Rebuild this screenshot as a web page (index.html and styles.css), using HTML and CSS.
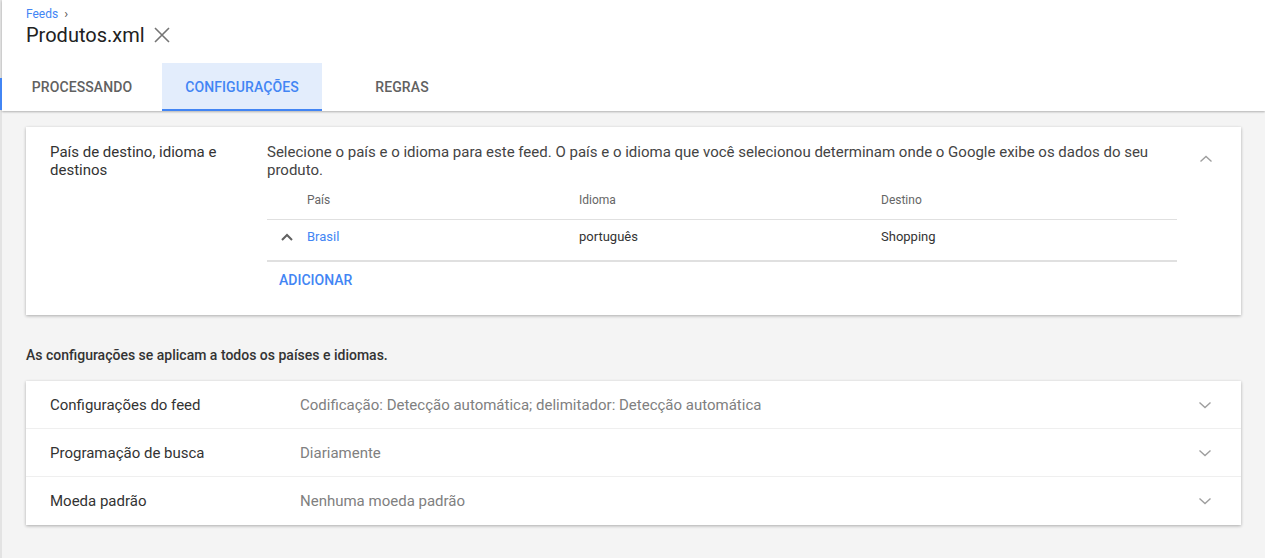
FILE: index.html
```html
<!DOCTYPE html>
<html lang="pt-BR">
<head>
<meta charset="utf-8">
<title>Produtos.xml</title>
<link rel="stylesheet" href="styles.css">
</head>
<body>
<div class="page">
  <header class="header">
    <div class="crumbs"><a class="crumb-link">Feeds</a><span class="crumb-sep">›</span></div>
    <div class="title-row">
      <h1 class="title">Produtos.xml</h1>
      <svg class="close" width="18" height="18" viewBox="0 0 18 18"><path d="M2 2 L16 16 M16 2 L2 16" stroke="#757575" stroke-width="1.6" fill="none"/></svg>
    </div>
    <nav class="tabs">
      <div class="tab">PROCESSANDO</div>
      <div class="tab active">CONFIGURAÇÕES</div>
      <div class="tab">REGRAS</div>
    </nav>
    <span class="side-indicator"></span>
  </header>

  <main class="content">
    <section class="card country-card">
      <div class="card-label">País de destino, idioma e destinos</div>
      <div class="card-body">
        <p class="desc">Selecione o país e o idioma para este feed. O país e o idioma que você selecionou determinam onde o Google exibe os dados do seu produto.</p>
        <div class="table">
          <div class="trow thead">
            <span class="cell-icon"></span>
            <span class="cell c1">País</span>
            <span class="cell c2">Idioma</span>
            <span class="cell c3">Destino</span>
          </div>
          <div class="trow tbody">
            <span class="cell-icon"><svg width="14" height="10" viewBox="0 0 14 10"><path d="M2 8 L7 3 L12 8" stroke="#616161" stroke-width="2" fill="none"/></svg></span>
            <span class="cell c1 link">Brasil</span>
            <span class="cell c2">português</span>
            <span class="cell c3">Shopping</span>
          </div>
        </div>
        <div class="add">ADICIONAR</div>
      </div>
      <div class="card-toggle"><svg width="14" height="10" viewBox="0 0 14 10"><path d="M1.5 7.5 L7 2.5 L12.5 7.5" stroke="#9e9e9e" stroke-width="1.4" fill="none"/></svg></div>
    </section>

    <p class="note">As configurações se aplicam a todos os países e idiomas.</p>

    <section class="card list-card">
      <div class="lrow">
        <span class="lname">Configurações do feed</span>
        <span class="lval">Codificação: Detecção automática; delimitador: Detecção automática</span>
        <svg class="chev" width="14" height="10" viewBox="0 0 14 10"><path d="M1.5 2.5 L7 7.5 L12.5 2.5" stroke="#9e9e9e" stroke-width="1.4" fill="none"/></svg>
      </div>
      <div class="lrow">
        <span class="lname">Programação de busca</span>
        <span class="lval">Diariamente</span>
        <svg class="chev" width="14" height="10" viewBox="0 0 14 10"><path d="M1.5 2.5 L7 7.5 L12.5 2.5" stroke="#9e9e9e" stroke-width="1.4" fill="none"/></svg>
      </div>
      <div class="lrow">
        <span class="lname">Moeda padrão</span>
        <span class="lval">Nenhuma moeda padrão</span>
        <svg class="chev" width="14" height="10" viewBox="0 0 14 10"><path d="M1.5 2.5 L7 7.5 L12.5 2.5" stroke="#9e9e9e" stroke-width="1.4" fill="none"/></svg>
      </div>
    </section>
  </main>
</div>
</body>
</html>
```

FILE: styles.css
```css
* { box-sizing: border-box; }
html, body { margin: 0; padding: 0; }
body {
  font-family: Roboto, "Liberation Sans", Arial, sans-serif;
  background: #f4f4f4;
  color: #333;
  height: 558px;
  overflow: hidden;
}
.page {
  border-left: 2px solid #e3e3e3;
  min-height: 558px;
}
.header {
  position: relative;
  background: #fff;
  padding-top: 6px;
  box-shadow: 0 1px 2px rgba(0,0,0,0.28);
  z-index: 1;
}
.crumbs {
  padding-left: 24px;
  font-size: 12px;
  line-height: 16px;
  display: flex;
  gap: 6px;
  align-items: center;
}
.crumb-link { color: #4285f4; }
.crumb-sep { color: #555; font-size: 13px; }
.title-row {
  display: flex;
  align-items: center;
  padding-left: 24px;
  height: 26px;
}
.title {
  margin: 0;
  font-size: 20px;
  font-weight: 400;
  color: #212121;
  line-height: 26px;
}
.close { margin-left: 8px; }
.tabs {
  display: flex;
  margin-top: 15px;
  height: 48px;
}
.tab {
  width: 160px;
  display: flex;
  align-items: center;
  justify-content: center;
  font-size: 14px;
  font-weight: 500;
  color: #616161;
  letter-spacing: 0.1px;
}
.tab.active {
  background: #e3edfc;
  color: #4285f4;
  border-bottom: 2px solid #4285f4;
  padding-top: 2px;
}
.side-indicator {
  position: absolute;
  left: -2px;
  top: 78px;
  width: 2px;
  height: 32px;
  background: #4285f4;
}
.content {
  padding: 16px 24px 0 24px;
}
.card {
  background: #fff;
  box-shadow: 0 1px 3px rgba(0,0,0,0.3);
}
.country-card {
  display: flex;
  padding: 16px 0 0 24px;
  height: 188px;
}
.card-label {
  width: 217px;
  font-size: 15px;
  line-height: 18px;
  color: #333;
  padding-right: 40px;
}
.card-body {
  width: 910px;
}
.desc {
  margin: 0;
  font-size: 15px;
  line-height: 18px;
  color: #444;
}
.table { margin-top: 3px; }
.trow {
  display: flex;
  align-items: center;
}
.thead {
  height: 38px;
  font-size: 12px;
  color: #666;
  border-bottom: 1px solid #e0e0e0;
  padding-bottom: 2px;
}
.tbody {
  height: 42px;
  font-size: 13px;
  color: #333;
  border-bottom: 2px solid #e0e0e0;
  padding-bottom: 7px;
}
.cell-icon {
  width: 40px;
  display: flex;
  justify-content: center;
}
.c1 { width: 272px; }
.c2 { width: 302px; }
.c3 { flex: 1; }
.link { color: #4285f4; }
.add {
  padding: 9px 0 0 12px;
  font-size: 14px;
  font-weight: 500;
  color: #4285f4;
  line-height: 18px;
}
.card-toggle {
  margin-left: 22px;
  padding-top: 6px;
}
.note {
  margin: 32px 0 18px;
  font-size: 14px;
  font-weight: 500;
  color: #333;
  line-height: 16px;
}
.lrow {
  display: flex;
  align-items: center;
  height: 48px;
  padding-left: 24px;
  border-bottom: 1px solid #efefef;
  font-size: 15px;
}
.lrow:last-child { border-bottom: none; }
.lname {
  width: 250px;
  color: #333;
}
.lval {
  flex: 1;
  color: #808080;
}
.chev { margin-right: 29px; }
```
